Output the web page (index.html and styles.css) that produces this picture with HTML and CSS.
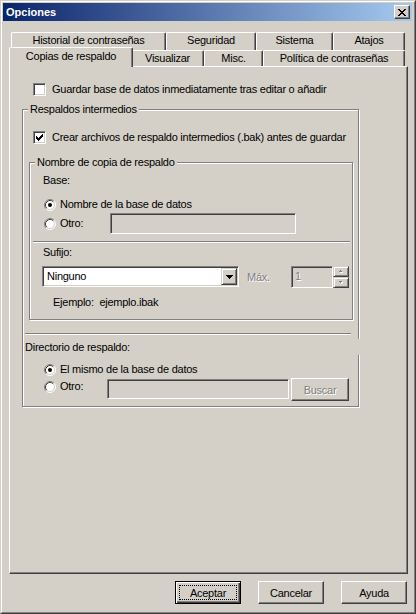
FILE: index.html
```html
<!DOCTYPE html>
<html lang="es">
<head>
<meta charset="utf-8">
<title>Opciones</title>
<link rel="stylesheet" href="styles.css">
</head>
<body>
<div class="window">
  <div class="frame">
    <div class="titlebar">
      <span class="title">Opciones</span>
      <span class="caption-btn">
        <svg width="8" height="7" viewBox="0 0 8 7" shape-rendering="crispEdges"><path fill="#000" d="M0 0h2v1H0zM6 0h2v1H6zM1 1h2v1H1zM5 1h2v1H5zM2 2h4v1H2zM3 3h2v1H3zM2 4h4v1H2zM1 5h2v1H1zM5 5h2v1H5zM0 6h2v1H0zM6 6h2v1H6z"/></svg>
      </span>
    </div>
    <div class="client">
      <div class="tabs">
        <div class="tabrow row-back">
          <div class="tab w-hist">Historial de contraseñas</div>
          <div class="tab w-seg">Seguridad</div>
          <div class="tab w-sis">Sistema</div>
          <div class="tab w-ata">Atajos</div>
        </div>
        <div class="tabrow row-front">
          <div class="tab selected w-cop">Copias de respaldo</div>
          <div class="tab w-vis">Visualizar</div>
          <div class="tab w-misc">Misc.</div>
          <div class="tab w-pol">Política de contraseñas</div>
        </div>
      </div>

      <div class="panel">
        <div class="check-row check-guardar">
          <span class="checkbox"></span>
          <span class="check-text">Guardar base de datos inmediatamente tras editar o añadir</span>
        </div>

        <div class="group group-outer">
          <div class="group-title">Respaldos intermedios</div>
          <div class="check-row check-crear">
            <span class="checkbox"><svg width="7" height="7" viewBox="0 0 7 7" shape-rendering="crispEdges"><path fill="#000" d="M0 2h1v3H0zM1 3h1v3H1zM2 4h1v3H2zM3 3h1v3H3zM4 2h1v3H4zM5 1h1v3H5zM6 0h1v3H6z"/></svg></span>
            <span class="check-text">Crear archivos de respaldo intermedios (.bak) antes de guardar</span>
          </div>

          <div class="group group-inner">
            <div class="group-title">Nombre de copia de respaldo</div>
            <div class="label label-base">Base:</div>
            <div class="radio-row radio-nombre">
              <svg class="radio" width="12" height="12" viewBox="0 0 12 12"><circle cx="6" cy="6" r="5" fill="#fff"/><path d="M2.11 9.89A5.5 5.5 0 0 1 9.89 2.11" fill="none" stroke="#808080"/><path d="M2.82 9.18A4.5 4.5 0 0 1 9.18 2.82" fill="none" stroke="#404040"/><path d="M9.89 2.11A5.5 5.5 0 0 1 2.11 9.89" fill="none" stroke="#fff"/><path d="M9.18 2.82A4.5 4.5 0 0 1 2.82 9.18" fill="none" stroke="#d4d0c8"/><circle cx="6" cy="6" r="2" fill="#000"/></svg>
              <span class="radio-text">Nombre de la base de datos</span>
            </div>
            <div class="radio-row radio-otro1">
              <svg class="radio" width="12" height="12" viewBox="0 0 12 12"><circle cx="6" cy="6" r="5" fill="#fff"/><path d="M2.11 9.89A5.5 5.5 0 0 1 9.89 2.11" fill="none" stroke="#808080"/><path d="M2.82 9.18A4.5 4.5 0 0 1 9.18 2.82" fill="none" stroke="#404040"/><path d="M9.89 2.11A5.5 5.5 0 0 1 2.11 9.89" fill="none" stroke="#fff"/><path d="M9.18 2.82A4.5 4.5 0 0 1 2.82 9.18" fill="none" stroke="#d4d0c8"/></svg>
              <span class="radio-text otro-base">Otro:</span>
              <span class="edit disabled edit-otro1"></span>
            </div>
            <div class="separator sep-inner"></div>
            <div class="label label-sufijo">Sufijo:</div>
            <div class="combo-row">
              <div class="combo">
                <span class="combo-text">Ninguno</span>
                <span class="combo-btn"><svg width="7" height="4" viewBox="0 0 7 4" shape-rendering="crispEdges"><path fill="#000" d="M0 0h7v1H0zM1 1h5v1H1zM2 2h3v1H2zM3 3h1v1H3z"/></svg></span>
              </div>
              <span class="max-label disabled-text">Máx.</span>
              <span class="edit disabled numbox"><span class="disabled-text">1</span></span>
              <span class="spinner">
                <span class="spin"><svg width="4" height="3" viewBox="0 0 4 3" shape-rendering="crispEdges"><path fill="#fff" d="M2 1h1v1H2zM1 2h3v1H1z"/><path fill="#808080" d="M1 0h1v1H1zM0 1h3v1H0z"/></svg></span>
                <span class="spin"><svg width="4" height="3" viewBox="0 0 4 3" shape-rendering="crispEdges"><path fill="#fff" d="M1 1h3v1H1zM2 2h1v1H2z"/><path fill="#808080" d="M0 0h3v1H0zM1 1h1v1H1z"/></svg></span>
              </span>
            </div>
            <div class="example">Ejemplo:&nbsp; ejemplo.ibak</div>
          </div>

          <div class="separator sep-outer"></div>
          <div class="dir-label">Directorio de respaldo:</div>
          <div class="radio-row radio-mismo">
            <svg class="radio" width="12" height="12" viewBox="0 0 12 12"><circle cx="6" cy="6" r="5" fill="#fff"/><path d="M2.11 9.89A5.5 5.5 0 0 1 9.89 2.11" fill="none" stroke="#808080"/><path d="M2.82 9.18A4.5 4.5 0 0 1 9.18 2.82" fill="none" stroke="#404040"/><path d="M9.89 2.11A5.5 5.5 0 0 1 2.11 9.89" fill="none" stroke="#fff"/><path d="M9.18 2.82A4.5 4.5 0 0 1 2.82 9.18" fill="none" stroke="#d4d0c8"/><circle cx="6" cy="6" r="2" fill="#000"/></svg>
            <span class="radio-text">El mismo de la base de datos</span>
          </div>
          <div class="radio-row radio-otro2">
            <span class="radio-wrap">
              <svg class="radio" width="12" height="12" viewBox="0 0 12 12"><circle cx="6" cy="6" r="5" fill="#fff"/><path d="M2.11 9.89A5.5 5.5 0 0 1 9.89 2.11" fill="none" stroke="#808080"/><path d="M2.82 9.18A4.5 4.5 0 0 1 9.18 2.82" fill="none" stroke="#404040"/><path d="M9.89 2.11A5.5 5.5 0 0 1 2.11 9.89" fill="none" stroke="#fff"/><path d="M9.18 2.82A4.5 4.5 0 0 1 2.82 9.18" fill="none" stroke="#d4d0c8"/></svg>
              <span class="radio-text otro-dir">Otro:</span>
            </span>
            <span class="edit disabled edit-otro2"></span>
            <span class="btn btn-buscar"><span class="disabled-text">Buscar</span></span>
          </div>
        </div>
      </div>

      <div class="buttons">
        <span class="btn btn-default"><span class="focus">Aceptar</span></span>
        <span class="btn">Cancelar</span>
        <span class="btn">Ayuda</span>
      </div>
    </div>
  </div>
</div>
</body>
</html>
```

FILE: styles.css
```css
* { box-sizing: border-box; }
html, body { margin: 0; padding: 0; }
body {
  width: 416px;
  height: 614px;
  overflow: hidden;
  background: #d4d0c8;
  font-family: "Liberation Sans", Arial, sans-serif;
  font-size: 11px;
  letter-spacing: -0.25px;
  color: #000;
}

/* window frame */
.window {
  width: 416px;
  height: 614px;
  border: 1px solid;
  border-color: #d4d0c8 #404040 #404040 #d4d0c8;
  background: #d4d0c8;
}
.frame {
  height: 100%;
  border: 1px solid;
  border-color: #fff #808080 #808080 #fff;
  padding: 1px 2px 1px 1px;
  display: flex;
  flex-direction: column;
}
.titlebar {
  flex: none;
  height: 18px;
  background: linear-gradient(to right, #0a246a, #a6caf0);
  display: flex;
  align-items: center;
  justify-content: space-between;
  padding: 0 2px 0 3px;
}
.title {
  color: #fff;
  font-weight: bold;
  letter-spacing: 0;
}
.caption-btn {
  width: 16px;
  height: 14px;
  border: 1px solid;
  border-color: #fff #404040 #404040 #fff;
  box-shadow: inset -1px -1px #808080, inset 1px 1px #d4d0c8;
  background: #d4d0c8;
  display: flex;
  align-items: center;
  justify-content: center;
}
.caption-btn svg { display: block; margin: 0 0 0 0; }

.client {
  flex: 1;
  display: flex;
  flex-direction: column;
  padding-top: 9px;
}

/* tabs */
.tabs { padding-left: 8px; }
.tabrow { display: flex; align-items: flex-start; height: 18px; }
.row-back { height: 18px; padding-top: 2px; }
.tab {
  flex: none;
  background: #d4d0c8;
  border-top: 1px solid #fff;
  border-left: 1px solid #fff;
  border-right: 1px solid #404040;
  box-shadow: inset -1px 0 #808080;
  border-radius: 2px 2px 0 0;
  text-align: center;
  white-space: nowrap;
}
.row-back .tab { height: 18px; line-height: 14px; }
.row-front .tab { height: 16px; margin-top: 2px; line-height: 15px; }
.row-front .tab.selected {
  position: relative;
  z-index: 1;
  height: 20px;
  margin: -1px -2px 0 -2px;
  line-height: 17px;
}
.w-hist { width: 155px; }
.w-seg { width: 90px; }
.w-sis { width: 77px; }
.w-ata { width: 72px; }
.w-cop { width: 124px; }
.w-vis { width: 73px; }
.w-misc { width: 59px; }
.w-pol { width: 142px; }

/* panel */
.panel {
  flex: none;
  height: 508px;
  margin: 0 4px 0 6px;
  border: 1px solid;
  border-color: #fff #404040 #404040 #fff;
  box-shadow: inset -1px -1px #808080;
  background: #d4d0c8;
}

.check-row {
  display: flex;
  align-items: center;
  height: 13px;
  white-space: nowrap;
}
.checkbox {
  flex: none;
  width: 13px;
  height: 13px;
  border: 1px solid;
  border-color: #808080 #fff #fff #808080;
  box-shadow: inset 1px 1px #404040, inset -1px -1px #d4d0c8;
  background: #fff;
  padding: 2px 0 0 2px;
  margin-right: 6px;
}
.checkbox svg { display: block; }
.check-text { line-height: 13px; }
.check-guardar { margin: 16px 0 0 23px; }
.check-crear { margin: 15px 0 0 10px; }

/* group boxes */
.group {
  border: 1px solid #808080;
  box-shadow: inset 1px 1px #fff, 1px 1px #fff;
}
.group-title {
  width: max-content;
  margin: -7px 0 0 5px;
  padding: 0 2px;
  line-height: 13px;
  background: #d4d0c8;
}
.group-outer {
  width: 337px;
  margin: 13px 0 0 12px;
  padding-bottom: 5px;
}
.group-inner {
  width: 324px;
  margin: 18px 0 0 6px;
  padding-bottom: 10px;
}

.label { line-height: 13px; }
.label-base { margin: 5px 0 0 13px; }
.label-sufijo { margin: 3px 0 0 13px; }

.radio-row {
  display: flex;
  align-items: center;
  white-space: nowrap;
}
.radio { flex: none; display: block; margin-right: 4px; }
.radio-text { line-height: 13px; }
.radio-nombre { height: 13px; margin: 11px 0 0 14px; }
.radio-otro1 { height: 21px; margin: 2px 0 0 14px; }
.otro-base { width: 50px; }
.radio-mismo { height: 13px; margin: 8px 0 0 21px; }
.radio-otro2 { align-items: flex-start; height: 23px; margin: 2px 0 0 21px; }
.radio-wrap { display: flex; align-items: center; margin-top: 2px; height: 13px; }
.otro-dir { width: 47px; }

.edit {
  display: block;
  flex: none;
  border: 1px solid;
  border-color: #808080 #fff #fff #808080;
  box-shadow: inset 1px 1px #404040, inset -1px -1px #d4d0c8;
  background: #fff;
}
.edit.disabled { background: #d4d0c8; }
.edit-otro1 { width: 186px; height: 21px; }
.edit-otro2 { width: 182px; height: 20px; margin-top: 1px; }

.separator {
  height: 2px;
  border-top: 1px solid #808080;
  border-bottom: 1px solid #fff;
}
.sep-inner { width: 317px; margin: 7px 0 0 3px; }
.sep-outer { width: 326px; margin: 13px 0 0 2px; }

.combo-row {
  display: flex;
  align-items: flex-start;
  height: 22px;
  margin: 7px 0 0 12px;
}
.combo {
  flex: none;
  display: flex;
  width: 197px;
  height: 21px;
  border: 1px solid;
  border-color: #808080 #fff #fff #808080;
  box-shadow: inset 1px 1px #404040, inset -1px -1px #d4d0c8;
  background: #fff;
  padding: 1px;
}
.combo-text { flex: 1; padding-left: 3px; line-height: 17px; }
.combo-btn {
  flex: none;
  width: 16px;
  height: 17px;
  border: 1px solid;
  border-color: #d4d0c8 #404040 #404040 #d4d0c8;
  box-shadow: inset 1px 1px #fff, inset -1px -1px #808080;
  background: #d4d0c8;
  display: flex;
  align-items: center;
  justify-content: center;
}
.combo-btn svg { display: block; }
.disabled-text { color: #808080; text-shadow: 1px 1px 0 #fff; }
.max-label { width: 44px; margin: 5px 0 0 8px; line-height: 13px; }
.numbox { width: 42px; height: 22px; padding: 2px 0 0 3px; line-height: 15px; }
.spinner { display: flex; flex-direction: column; width: 16px; }
.spin {
  width: 16px;
  height: 11px;
  border: 1px solid;
  border-color: #d4d0c8 #404040 #404040 #d4d0c8;
  box-shadow: inset 1px 1px #fff, inset -1px -1px #808080;
  background: #d4d0c8;
  display: flex;
  align-items: center;
  justify-content: center;
}
.spin svg { display: block; }
.example { margin: 8px 0 0 23px; line-height: 13px; }

.dir-label {
  margin: 4px -3px 0 2px;
  line-height: 16px;
  background: #d4d0c8;
}

/* buttons */
.btn {
  flex: none;
  display: flex;
  align-items: center;
  justify-content: center;
  width: 66px;
  height: 23px;
  border: 1px solid;
  border-color: #fff #404040 #404040 #fff;
  box-shadow: inset -1px -1px #808080, inset 1px 1px #d4d0c8;
  background: #d4d0c8;
  white-space: nowrap;
}
.btn-buscar { width: 58px; margin-left: 2px; }
.btn-default {
  border-color: #000;
  box-shadow: inset 1px 1px #fff, inset -1px -1px #404040, inset -2px -2px #808080;
  padding: 3px;
}
.focus {
  width: 100%;
  height: 100%;
  border: 1px dotted #000;
  display: flex;
  align-items: center;
  justify-content: center;
}
.buttons {
  flex: none;
  display: flex;
  justify-content: flex-end;
  gap: 17px;
  margin-top: 7px;
  padding-right: 5px;
}
```
